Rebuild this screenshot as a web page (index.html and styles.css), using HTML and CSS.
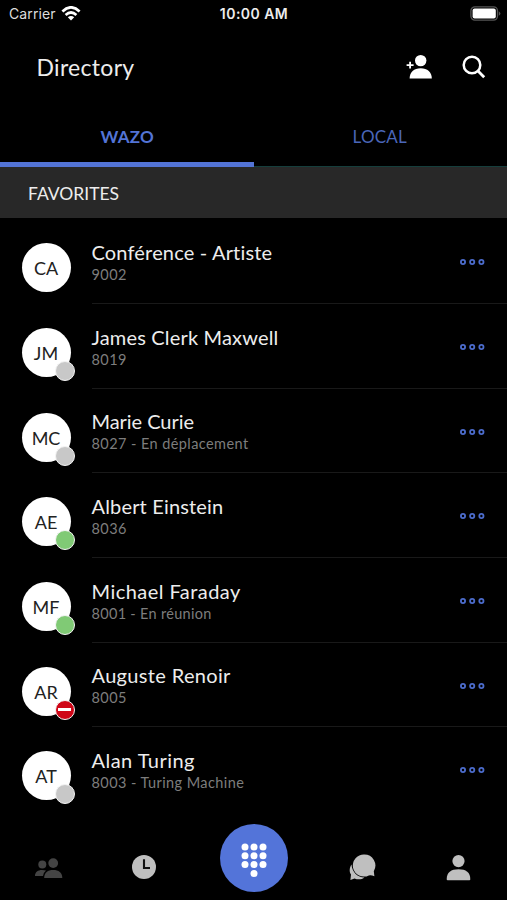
FILE: index.html
```html
<!DOCTYPE html>
<html lang="en">
<head>
<meta charset="utf-8">
<title>Directory</title>
<link rel="stylesheet" href="styles.css">
</head>
<body>
<svg class="defs" width="0" height="0"><symbol id="more" viewBox="0 0 26 8"><g fill="none" stroke="#4c6ccc" stroke-width="1.8"><circle cx="4" cy="4" r="2.1"/><circle cx="13.2" cy="4" r="2.1"/><circle cx="22.4" cy="4" r="2.1"/></g></symbol></svg>
<div class="app">
  <div class="status">
    <div class="carrier"><span>Carrier</span>
      <svg width="20" height="15" viewBox="0 0 20 15" fill="none" stroke="#fff" stroke-width="2.7"><path d="M1.4 5.4Q10-2.7 18.6 5.4M4.6 8.9Q10 4.1 15.4 8.9"/><path d="M6.8 11.2Q10 8.6 13.2 11.2L10 14.4Z" fill="#fff" stroke="none"/></svg>
    </div>
    <div class="clock">10:00 AM</div>
    <svg class="battery" width="31" height="16" viewBox="0 0 31 16"><rect x=".9" y=".9" width="26.6" height="13.2" rx="4" fill="none" stroke="#555" stroke-width="1.3"/><rect x="2.6" y="2.6" width="23.2" height="9.8" rx="2" fill="#fff"/><path d="M28.8 5.2Q32 7.5 28.8 9.8Z" fill="#555"/></svg>
  </div>
  <header class="header">
    <h1>Directory</h1>
    <svg class="add" width="27" height="26" viewBox="0 0 27 26" fill="#fff"><circle cx="14.7" cy="6.6" r="5.7"/><path d="M3.6 24.6C3.6 18 8 14.2 14.7 14.2S25.8 18 25.8 24.6Z"/><path d="M4.1 7.8V14.6M.6 11.2H7.6" stroke="#fff" stroke-width="1.8"/></svg>
    <svg class="search" width="24" height="24" viewBox="0 0 24 24" fill="none" stroke="#fff" stroke-width="2.5"><circle cx="10" cy="10" r="8.3"/><path d="M16 16L22.2 22.3" stroke-width="2.8"/></svg>
  </header>
  <nav class="tabs"><div class="tab active"><span>WAZO</span></div><div class="tab local"><span>LOCAL</span></div></nav>
  <div class="section"><span>FAVORITES</span></div>
  <main class="list">
    <div class="row"><div class="avatar">CA</div><div class="info"><div class="name n1">Conférence - Artiste</div><div class="sub">9002</div><svg class="more"><use href="#more"/></svg></div></div>
    <div class="row"><div class="avatar">JM<i class="dot"></i></div><div class="info"><div class="name n2">James Clerk Maxwell</div><div class="sub">8019</div><svg class="more"><use href="#more"/></svg></div></div>
    <div class="row"><div class="avatar">MC<i class="dot"></i></div><div class="info"><div class="name n3">Marie Curie</div><div class="sub">8027 - En déplacement</div><svg class="more"><use href="#more"/></svg></div></div>
    <div class="row"><div class="avatar">AE<i class="dot on"></i></div><div class="info"><div class="name n4">Albert Einstein</div><div class="sub">8036</div><svg class="more"><use href="#more"/></svg></div></div>
    <div class="row"><div class="avatar">MF<i class="dot on"></i></div><div class="info"><div class="name n5">Michael Faraday</div><div class="sub s5">8001 - En réunion</div><svg class="more"><use href="#more"/></svg></div></div>
    <div class="row"><div class="avatar">AR<i class="dot busy"></i></div><div class="info"><div class="name n6">Auguste Renoir</div><div class="sub">8005</div><svg class="more"><use href="#more"/></svg></div></div>
    <div class="row"><div class="avatar">AT<i class="dot"></i></div><div class="info"><div class="name n7">Alan Turing</div><div class="sub">8003 - Turing Machine</div><svg class="more"><use href="#more"/></svg></div></div>
  </main>
  <footer class="bottom">
    <svg class="people" width="28" height="22" viewBox="0 0 28 22" fill="#444"><circle cx="7.3" cy="7.4" r="4"/><path d="M0 19C0 15 3 13 7 13Q9.5 13 11 13.6Q8.6 15.5 8 19Z"/><circle cx="18.2" cy="6.1" r="4.9"/><path d="M9.2 21C9.2 15.5 12.8 13 18.2 13S27.3 15.5 27.3 21Z"/></svg>
    <svg class="history" width="24" height="24" viewBox="0 0 24 24"><circle cx="12" cy="12" r="12" fill="#bfbfbf"/><path d="M12 4.2V13H18" fill="none" stroke="#111" stroke-width="2.1"/></svg>
    <div class="dial"><svg width="28" height="36" viewBox="0 0 28 36" fill="#fff"><circle cx="5" cy="5" r="3.5"/><circle cx="14" cy="5" r="3.5"/><circle cx="23" cy="5" r="3.5"/><circle cx="5" cy="13.8" r="3.5"/><circle cx="14" cy="13.8" r="3.5"/><circle cx="23" cy="13.8" r="3.5"/><circle cx="5" cy="22.6" r="3.5"/><circle cx="14" cy="22.6" r="3.5"/><circle cx="23" cy="22.6" r="3.5"/><circle cx="14" cy="31.4" r="3.5"/></svg></div>
    <svg class="chat" width="27" height="27" viewBox="0 0 27 27" fill="#bfbfbf"><path d="M2.5 10.5C.2 14 .2 18 2 20.5L1.4 26L5.5 24.4C9 25.8 13 25.5 15.5 23.4C9 23.5 3 18.5 2.5 10.5Z"/><path d="M15.2.6A11 11 0 1 0 19.8 21.4Q22.5 21 25.4 22.2L24.8 17.2A11 11 0 0 0 15.2.6Z"/></svg>
    <svg class="profile" width="25" height="27" viewBox="0 0 25 27" fill="#bfbfbf"><circle cx="12.5" cy="7.1" r="6.1"/><path d="M.7 25.2C.7 18.5 5 15.3 12.5 15.3S24.3 18.5 24.3 25.2Q24.3 26.2 23.3 26.2H1.7Q.7 26.2 .7 25.2Z"/></svg>
  </footer>
</div>
</body>
</html>
```
FILE: styles.css
```css
* { box-sizing: border-box; }
body { margin: 0; background: #000; color: #ededed; font-family: Lato, sans-serif; }
.defs { display: block; }
.app { width: 507px; height: 900px; overflow: hidden; display: flex; flex-direction: column; }
.status { height: 28px; display: grid; grid-template-columns: 1fr 1fr 1fr; align-items: center; padding: 0 5px 0 9px; font: 14px/28px Inter, sans-serif; flex: none; }
.carrier { display: flex; align-items: center; gap: 6px; color: #ddd; letter-spacing: .1px; }
.carrier svg { margin: -2px 0 0 -1px; }
.clock { text-align: center; font-weight: 600; letter-spacing: .45px; white-space: nowrap; margin-left: -3px; }
.battery { justify-self: end; margin-right: 1px; margin-top: -1px; }
.header { height: 82px; display: flex; align-items: flex-start; padding: 25px 21px 0 36.5px; flex: none; }
h1 { margin: 0; font-size: 23px; line-height: 28px; font-weight: 400; letter-spacing: .3px; flex: 1; }
.add { margin: 1px 29px 0 0; }
.search { margin: 2px 0 0; }
.tabs { display: grid; grid-template-columns: 1fr 1fr; height: 57px; flex: none; color: #5374d6; font-size: 17px; line-height: 20px; text-align: center; }
.tab { padding-top: 17px; border-bottom: 1px solid #153e3c; }
.active { border-bottom: 5px solid #5374d6; font-weight: 700; letter-spacing: .2px; padding-left: 1px; }
.local { color: #4a66b9; letter-spacing: .2px; padding-right: 1px; }
.section { height: 51px; background: #282828; padding: 16px 28px; font-size: 17.5px; line-height: 22px; flex: none; }
.list { height: 593px; flex: none; }
.row { height: 84.7px; display: flex; padding-left: 21.5px; }
.avatar { position: relative; width: 49px; height: 49px; border-radius: 50%; background: #fff; color: #222; margin: 25.3px 21px 0 0; font-size: 18px; line-height: 51px; text-align: center; flex: none; }
.dot { position: absolute; left: 33px; top: 33px; width: 20px; height: 20px; border-radius: 50%; background: #c8c8c8; border: 1.5px solid #f4f4f4; }
.on { background: #80ca75; }
.busy { background: #cf0617; display: flex; align-items: center; justify-content: center; }
.busy::after { content: ""; width: 13px; height: 2.5px; background: #fff; }
.info { position: relative; flex: 1; height: 86px; border-bottom: 1px solid #191919; padding-top: 22px; }
.row:last-child .info { border: 0; }
.name { font-size: 20px; line-height: 25px; letter-spacing: .4px; }
.n1, .n2, .n4 { letter-spacing: .17px; }
.n3 { letter-spacing: -.05px; }
.n5 { letter-spacing: .46px; }
.n6 { letter-spacing: .34px; }
.n7 { letter-spacing: .46px; }
.sub { color: #7d7d7d; font-size: 14.5px; line-height: 18px; letter-spacing: .42px; padding-top: 1px; }
.s5 { letter-spacing: .3px; }
.more { position: absolute; right: 22px; top: 40.3px; width: 26px; height: 8px; }
.bottom { height: 89px; display: flex; align-items: flex-start; padding: 12px 35px 0 35px; flex: none; }
.people { margin: 34px 69px 0 0; }
.history { margin: 32px 64px 0 0; }
.dial { width: 68px; height: 68px; border-radius: 50%; background: #5374d9; display: flex; align-items: center; justify-content: center; margin: 1px 61px 0 0; padding-top: 4px; }
.chat { margin: 31px 70px 0 0; }
.profile { margin-top: 31px; }
```
